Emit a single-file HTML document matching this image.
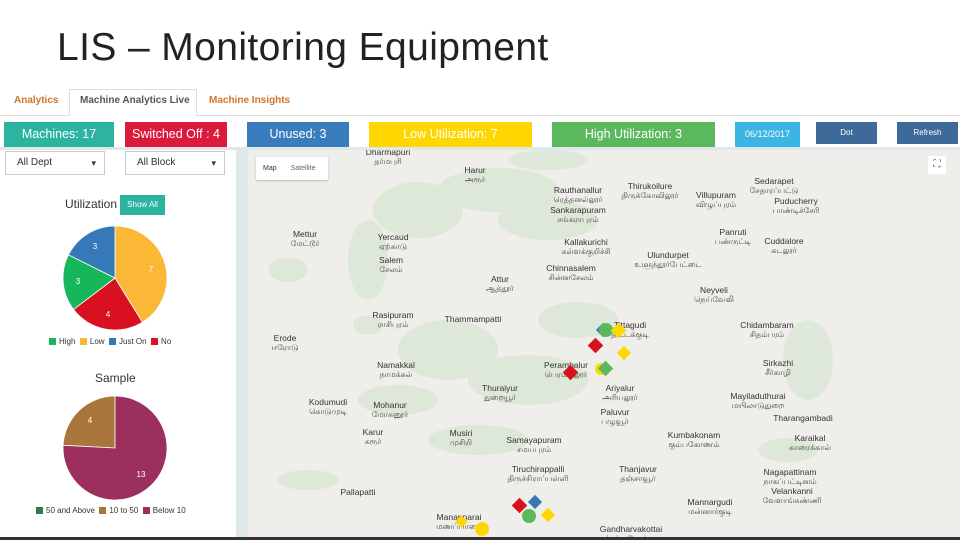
<!DOCTYPE html>
<html><head><meta charset="utf-8"><style>
*{margin:0;padding:0;box-sizing:border-box}
body{width:960px;height:540px;overflow:hidden;background:#fff;font-family:"Liberation Sans",sans-serif;position:relative}
.a{position:absolute}
.title{left:57px;top:26px;font-size:39px;color:#222;font-weight:300;letter-spacing:0.4px}
.tab{top:95px;font-size:10px;font-weight:bold}
.btn{top:122px;height:25px;color:#fff;font-size:12.5px;text-align:center;line-height:25px}
.sel{top:151px;height:24px;border:1px solid #ccc;font-size:10px;line-height:22px;padding-left:11px;color:#333;background:#fff}
.sel:after{content:"▾";position:absolute;right:8px;top:0;font-size:9px}
.l{position:absolute;font-size:8.5px;color:#333;text-align:center;line-height:10px;white-space:nowrap;transform:translateX(-50%)}
.l b{display:block;font-weight:normal;font-family:"DejaVu Sans","Noto Sans CJK JP",sans-serif;font-size:8px;color:#444}
.lg{font-size:8px;color:#333;top:337px;white-space:nowrap}
.sq{display:inline-block;width:7px;height:7px;vertical-align:-1px;margin-right:3px}
</style></head><body>
<div class="a title">LIS – Monitoring Equipment</div>
<div class="a" style="left:69px;top:89px;width:128px;height:27px;border:1px solid #ddd;border-bottom:none;background:#fff"></div>
<div class="a" style="left:197px;top:115px;width:763px;height:1px;background:#ddd"></div>
<div class="a" style="left:0;top:115px;width:69px;height:1px;background:#ddd"></div>
<div class="a tab" style="left:14px;color:#d0742a">Analytics</div>
<div class="a tab" style="left:80px;color:#555">Machine Analytics Live</div>
<div class="a tab" style="left:209px;color:#d0742a">Machine Insights</div>
<div class="a btn" style="left:4px;width:110px;background:#2cb4a0">Machines: 17</div>
<div class="a btn" style="left:125px;width:102px;background:#dc1a3c">Switched Off : 4</div>
<div class="a btn" style="left:247px;width:102px;background:#3a7dbd">Unused: 3</div>
<div class="a btn" style="left:369px;width:163px;background:#ffd700">Low Utilization: 7</div>
<div class="a btn" style="left:552px;width:163px;background:#5cb85c">High Utilization: 3</div>
<div class="a btn" style="left:735px;width:65px;background:#3cb4e4;font-size:9px">06/12/2017</div>
<div class="a btn" style="left:816px;width:61px;height:22px;line-height:22px;background:#3d6a98;font-size:8px">Dot</div>
<div class="a btn" style="left:897px;width:61px;height:22px;line-height:22px;background:#3d6a98;font-size:8px">Refresh</div>
<div class="a" style="left:0;top:147px;width:960px;height:3px;background:#dfe8e8"></div>
<div class="a" style="left:236px;top:147px;width:12px;height:393px;background:#dfe8e8"></div>
<div class="a sel" style="left:5px;width:100px">All Dept</div>
<div class="a sel" style="left:125px;width:100px">All Block</div>
<div class="a" style="left:65px;top:197px;font-size:12px;color:#333">Utilization</div>
<div class="a" style="left:120px;top:195px;width:45px;height:20px;background:#2cb4a0;color:#fff;font-size:8px;line-height:20px;text-align:center">Show All</div>
<svg class="a" style="left:0;top:0" width="236" height="540">
<path d="M115 278 L115 226 A52 52 0 0 1 142.4 322.2Z" fill="#fbb836" stroke="#fff" stroke-width=".8"/>
<path d="M115 278 L142.4 322.2 A52 52 0 0 1 73.5 309.4Z" fill="#d9101f" stroke="#fff" stroke-width=".8"/>
<path d="M115 278 L73.5 309.4 A52 52 0 0 1 68.5 254.8Z" fill="#16b75a" stroke="#fff" stroke-width=".8"/>
<path d="M115 278 L68.5 254.8 A52 52 0 0 1 115 226Z" fill="#3679b8" stroke="#fff" stroke-width=".8"/>
<g fill="#fff" font-size="8" text-anchor="middle" font-family="Liberation Sans"><text x="95" y="249">3</text><text x="151" y="272">7</text><text x="78" y="284">3</text><text x="108" y="317">4</text></g>
<path d="M115 448 L63.1 445.3 A52 52 0 0 1 115 396Z" fill="#a8753a" stroke="#fff" stroke-width=".8"/>
<path d="M115 448 L115 396 A52 52 0 1 1 63.1 445.3Z" fill="#9c2f5e" stroke="#fff" stroke-width=".8"/>
<g fill="#fff" font-size="8" text-anchor="middle" font-family="Liberation Sans"><text x="90" y="423">4</text><text x="141" y="477">13</text></g>
</svg>
<div class="a lg" style="left:49px"><span class="sq" style="background:#16b75a"></span>High &nbsp;<span class="sq" style="background:#fbb836"></span>Low &nbsp;<span class="sq" style="background:#3679b8"></span>Just On &nbsp;<span class="sq" style="background:#d9101f"></span>No</div>
<div class="a" style="left:95px;top:371px;font-size:12px;color:#333">Sample</div>
<div class="a lg" style="left:36px;top:506px"><span class="sq" style="background:#2f7a4a"></span>50 and Above &nbsp;<span class="sq" style="background:#a8753a"></span>10 to 50 &nbsp;<span class="sq" style="background:#9c2f5e"></span>Below 10</div>

<div class="a" style="left:248px;top:150px;width:712px;height:387px;background:#efeeea;overflow:hidden">
<svg width="712" height="387" style="position:absolute;left:0;top:0">
<g fill="#dbe7d4" opacity=".8">
<ellipse cx="170" cy="60" rx="45" ry="28"/><ellipse cx="250" cy="40" rx="60" ry="22"/><ellipse cx="300" cy="70" rx="50" ry="20"/>
<ellipse cx="120" cy="110" rx="20" ry="40"/><ellipse cx="40" cy="120" rx="20" ry="12"/><ellipse cx="120" cy="175" rx="15" ry="10"/>
<ellipse cx="200" cy="200" rx="50" ry="30"/><ellipse cx="280" cy="230" rx="60" ry="25"/><ellipse cx="330" cy="170" rx="40" ry="18"/>
<ellipse cx="150" cy="250" rx="40" ry="15"/><ellipse cx="230" cy="290" rx="50" ry="15"/><ellipse cx="560" cy="210" rx="25" ry="40"/>
<ellipse cx="540" cy="300" rx="30" ry="12"/><ellipse cx="300" cy="10" rx="40" ry="10"/><ellipse cx="60" cy="330" rx="30" ry="10"/>
</g></svg>
<div class="a" style="left:8px;top:7px;width:72px;height:23px;background:#fff;box-shadow:0 1px 2px #bbb;font-size:7px;line-height:23px;color:#333"><span style="margin-left:7px">Map</span><span style="margin-left:14px;color:#666">Satellite</span></div>
<div class="a" style="left:680px;top:6px;width:18px;height:18px;background:#fff;font-size:10px;text-align:center;line-height:18px;color:#555">⛶</div>
<div class="l" style="left:140px;top:-3px">Dharmapuri<b>தர்மபுரி</b></div>
<div class="l" style="left:227px;top:15px">Harur<b>அரூர்</b></div>
<div class="l" style="left:57px;top:79px">Mettur<b>மேட்டூர்</b></div>
<div class="l" style="left:145px;top:82px">Yercaud<b>ஏற்காடு</b></div>
<div class="l" style="left:143px;top:105px">Salem<b>சேலம்</b></div>
<div class="l" style="left:252px;top:124px">Attur<b>ஆத்தூர்</b></div>
<div class="l" style="left:145px;top:160px">Rasipuram<b>ராசிபுரம்</b></div>
<div class="l" style="left:225px;top:164px">Thammampatti</div>
<div class="l" style="left:37px;top:183px">Erode<b>ஈரோடு</b></div>
<div class="l" style="left:330px;top:35px">Rauthanallur<b>ரெத்தனல்லூர்</b></div>
<div class="l" style="left:330px;top:55px">Sankarapuram<b>சங்கராபுரம்</b></div>
<div class="l" style="left:402px;top:31px">Thirukoilure<b>திருக்கோவிலூர்</b></div>
<div class="l" style="left:468px;top:40px">Villupuram<b>விழுப்புரம்</b></div>
<div class="l" style="left:338px;top:87px">Kallakurichi<b>கள்ளக்குறிச்சி</b></div>
<div class="l" style="left:323px;top:113px">Chinnasalem<b>சின்னசேலம்</b></div>
<div class="l" style="left:420px;top:100px">Ulundurpet<b>உளுந்தூர்பேட்டை</b></div>
<div class="l" style="left:485px;top:77px">Panruti<b>பண்ருட்டி</b></div>
<div class="l" style="left:536px;top:86px">Cuddalore<b>கடலூர்</b></div>
<div class="l" style="left:526px;top:26px">Sedarapet<b>சேதாரப்பட்டு</b></div>
<div class="l" style="left:548px;top:46px">Puducherry<b>பாண்டிச்சேரி</b></div>
<div class="l" style="left:466px;top:135px">Neyveli<b>நெய்வேலி</b></div>
<div class="l" style="left:519px;top:170px">Chidambaram<b>சிதம்பரம்</b></div>
<div class="l" style="left:530px;top:208px">Sirkazhi<b>சீர்காழி</b></div>
<div class="l" style="left:510px;top:241px">Mayiladuthurai<b>மயிலாடுதுறை</b></div>
<div class="l" style="left:555px;top:263px">Tharangambadi</div>
<div class="l" style="left:562px;top:283px">Karaikal<b>காரைக்கால்</b></div>
<div class="l" style="left:542px;top:317px">Nagapattinam<b>நாகப்பட்டினம்</b></div>
<div class="l" style="left:544px;top:336px">Velankanni<b>வேளாங்கண்ணி</b></div>
<div class="l" style="left:446px;top:280px">Kumbakonam<b>கும்பகோணம்</b></div>
<div class="l" style="left:462px;top:347px">Mannargudi<b>மன்னார்குடி</b></div>
<div class="l" style="left:390px;top:314px">Thanjavur<b>தஞ்சாவூர்</b></div>
<div class="l" style="left:290px;top:314px">Tiruchirappalli<b>திருச்சிராப்பள்ளி</b></div>
<div class="l" style="left:286px;top:285px">Samayapuram<b>சமயபுரம்</b></div>
<div class="l" style="left:372px;top:233px">Ariyalur<b>அரியலூர்</b></div>
<div class="l" style="left:367px;top:257px">Paluvur<b>பழுவூர்</b></div>
<div class="l" style="left:318px;top:210px">Perambalur<b>பெரம்பலூர்</b></div>
<div class="l" style="left:252px;top:233px">Thuraiyur<b>துறையூர்</b></div>
<div class="l" style="left:148px;top:210px">Namakkal<b>நாமக்கல்</b></div>
<div class="l" style="left:80px;top:247px">Kodumudi<b>கொடுமுடி</b></div>
<div class="l" style="left:142px;top:250px">Mohanur<b>மோகனூர்</b></div>
<div class="l" style="left:125px;top:277px">Karur<b>கரூர்</b></div>
<div class="l" style="left:213px;top:278px">Musiri<b>முசிறி</b></div>
<div class="l" style="left:110px;top:337px">Pallapatti</div>
<div class="l" style="left:382px;top:170px">Tittagudi<b>திட்டக்குடி</b></div>
<div class="l" style="left:211px;top:362px">Manapparai<b>மணப்பாறை</b></div>
<div class="l" style="left:383px;top:374px">Gandharvakottai<b>கந்தர்வகோட்டை</b></div>
<svg width="712" height="387" style="position:absolute;left:0;top:0">
<g transform="translate(-248,-150)">
<rect x="598" y="325" width="10" height="10" fill="#3679b8" transform="rotate(45 603 330)"/>
<circle cx="606" cy="330" r="7" fill="#5cb85c"/>
<rect x="613" y="325" width="11" height="11" fill="#ffd700" transform="rotate(45 618.5 330.5)"/>
<rect x="590" y="340" width="11" height="11" fill="#d9101f" transform="rotate(45 595.5 345.5)"/>
<rect x="619" y="348" width="10" height="10" fill="#ffd700" transform="rotate(45 624 353)"/>
<circle cx="601" cy="369" r="6" fill="#ffd700"/>
<rect x="600" y="363" width="11" height="11" fill="#5cb85c" transform="rotate(45 605.5 368.5)"/>
<rect x="565" y="367" width="11" height="11" fill="#d9101f" transform="rotate(45 570.5 372.5)"/>
<rect x="514" y="500" width="11" height="11" fill="#d9101f" transform="rotate(45 519.5 505.5)"/>
<rect x="530" y="497" width="10" height="10" fill="#3679b8" transform="rotate(45 535 502)"/>
<circle cx="529" cy="516" r="7" fill="#5cb85c"/>
<rect x="543" y="510" width="10" height="10" fill="#ffd700" transform="rotate(45 548 515)"/>
<circle cx="482" cy="529" r="7" fill="#ffd700"/>
<rect x="457" y="517" width="9" height="9" fill="#ffd700" transform="rotate(45 461.5 521.5)"/>
</g></svg>
</div>
<div class="a" style="left:0;top:537px;width:960px;height:3px;background:#333"></div>
</body></html>
